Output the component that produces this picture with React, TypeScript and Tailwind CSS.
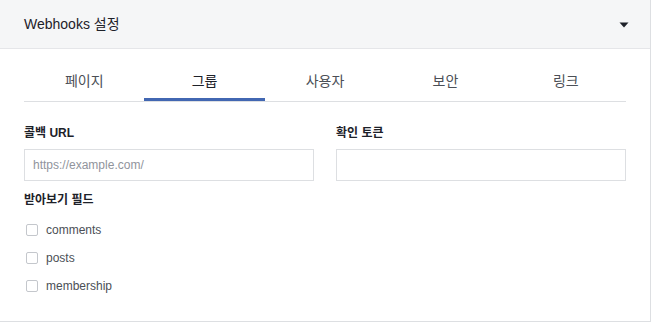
import * as React from "react"

const tabs = ["페이지", "그룹", "사용자", "보안", "링크"]
const fields = ["comments", "posts", "membership"]

export default function App() {
	const [active, setActive] = React.useState(1)

	return (
		<div
			className="w-[651px] h-[323px] bg-white overflow-hidden"
			style={{ fontFamily: '"Liberation Sans", Arial, "Noto Sans CJK KR", sans-serif' }}
		>
			<div className="w-[651px] h-[322px] border-r border-b border-[#dddfe2] bg-white">
				{/* ===== Header ===== */}
				<div className="h-[49px] bg-[#f5f6f7] border-b border-[#e5e6e9] flex items-center justify-between pl-[24px] pr-[21px]">
					<span className="text-[14px] text-[#1d2129]">Webhooks 설정</span>
					<svg width="10" height="6" viewBox="0 0 10 6" className="mt-[1px]">
						<path d="M0.5 0.5 H9.5 L5 5.5 Z" fill="#1d2129" />
					</svg>
				</div>

				<div className="px-[24px]">
					{/* ===== Tabs ===== */}
					<div className="flex border-b border-[#dddfe2] mt-[12px]">
						{tabs.map((t, i) => (
							<button
								key={t}
								onClick={() => setActive(i)}
								className={`flex-1 h-[40px] pt-[3px] flex items-center justify-center text-[14px] border-b-[3px] ${
									i === active ? "border-[#4267b2] text-[#1d2129]" : "border-transparent text-[#4b4f56]"
								}`}
							>
								{t}
							</button>
						))}
					</div>

					{/* ===== Fields ===== */}
					<div className="grid grid-cols-2 gap-x-[22px] pt-[23px]">
						<div>
							<div className="h-[16px] leading-[16px] text-[12px] font-bold text-[#1d2129]">콜백 URL</div>
							<input
								placeholder="https://example.com/"
								className="mt-[8px] w-full h-[32px] border border-[#dddfe2] px-[8px] text-[12px] text-[#1d2129] placeholder:text-[#90949c] outline-none"
							/>
						</div>
						<div>
							<div className="h-[16px] leading-[16px] text-[12px] font-bold text-[#1d2129]">확인 토큰</div>
							<input className="mt-[8px] w-full h-[32px] border border-[#dddfe2] px-[8px] text-[12px] outline-none" />
						</div>
					</div>

					<div className="mt-[11px] h-[16px] leading-[16px] text-[12px] font-bold text-[#1d2129]">받아보기 필드</div>
					<div className="mt-[12px] flex flex-col gap-[8px]">
						{fields.map((f) => (
							<label key={f} className="h-[20px] flex items-center pl-[2px] text-[12px] text-[#4b4f56]">
								<span className="w-[12px] h-[12px] rounded-[2px] border border-[#c4c7cc] bg-white" />
								<span className="ml-[8px]">{f}</span>
							</label>
						))}
					</div>
				</div>
			</div>
		</div>
	)
}
